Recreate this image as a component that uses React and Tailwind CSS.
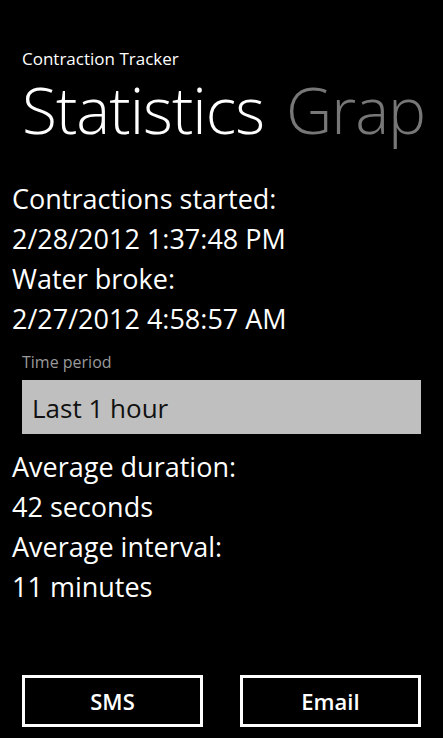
import React from 'react';

const font = { fontFamily: '"Open Sans", "Noto Sans", sans-serif' };

function StatLine({ children }) {
    return <div className="text-[27px] leading-[40px] text-white">{children}</div>;
}

function OutlineButton({ label }) {
    return (
        <button className="w-[181px] h-[52px] border-[3px] border-white bg-black text-white text-[22px] font-semibold flex items-center justify-center">
            {label}
        </button>
    );
}

export default function App() {
    return (
        <div className="w-[443px] h-[738px] bg-black overflow-hidden flex flex-col" style={font}>
            {/* Pivot header */}
            <div className="pt-[50px] pl-[22px]">
                <div className="text-[17px] leading-[18px] text-white">Contraction Tracker</div>
                <div className="flex gap-[22px] mt-[8px] text-[64px] leading-[68px] font-light tracking-[-1px] whitespace-nowrap">
                    <span className="text-white">Statistics</span>
                    <span className="text-[#777]">Grap</span>
                </div>
            </div>

            {/* Dates */}
            <div className="mt-[35px] pl-[12px]">
                <StatLine>Contractions started:</StatLine>
                <StatLine>2/28/2012 1:37:48 PM</StatLine>
                <StatLine>Water broke:</StatLine>
                <StatLine>2/27/2012 4:58:57 AM</StatLine>
            </div>

            {/* Time period picker */}
            <div className="mt-[13px] px-[22px]">
                <div className="text-[16px] leading-[20px] text-[#9a9a9a]">Time period</div>
                <div className="mt-[8px] h-[54px] bg-[#bfbfbf] pl-[10px] pt-[2px] text-[26px] leading-[52px] text-[#111]">
                    Last 1 hour
                </div>
            </div>

            {/* Averages */}
            <div className="mt-[13px] pl-[12px]">
                <StatLine>Average duration:</StatLine>
                <StatLine>42 seconds</StatLine>
                <StatLine>Average interval:</StatLine>
                <StatLine>11 minutes</StatLine>
            </div>

            <div className="mt-[68px] px-[22px] flex justify-between">
                <OutlineButton label="SMS" />
                <OutlineButton label="Email" />
            </div>
        </div>
    );
}
